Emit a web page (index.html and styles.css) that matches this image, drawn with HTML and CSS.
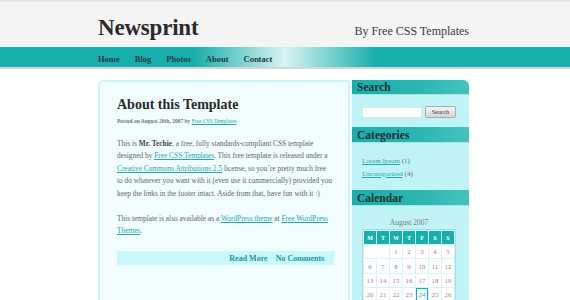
FILE: index.html
```
<!DOCTYPE html>
<html>
<head>
<meta charset="utf-8">
<title>Newsprint</title>
<link rel="stylesheet" href="styles.css">
</head>
<body>
<div class="header">
  <div class="wrap head-in">
    <h1 class="logo">Newsprint</h1>
    <p class="tagline">By Free CSS Templates</p>
  </div>
</div>
<div class="nav">
  <ul class="wrap menu">
    <li><a href="#">Home</a></li>
    <li><a href="#">Blog</a></li>
    <li><a href="#">Photos</a></li>
    <li><a href="#">About</a></li>
    <li><a href="#">Contact</a></li>
  </ul>
</div>
<div class="wrap page">
  <div class="content">
    <div class="post">
      <h2 class="title">About this Template</h2>
      <p class="meta">Posted on August 20th, 2007 by <a href="#">Free CSS Templates</a></p>
      <div class="entry">
        <p>This is <strong>Mr. Techie</strong>, a free, fully standards-compliant CSS template designed by <a href="#">Free CSS Templates</a>. This free template is released under a <a href="#">Creative Commons Attributions 2.5</a> license, so you’re pretty much free to&nbsp;do whatever you want with it (even use it commercially) provided you keep the links in the footer intact. Aside from that, have fun with it :)</p>
        <p>This template is also available as a <a href="#">WordPress theme</a> at <a href="#">Free WordPress Themes</a>.</p>
      </div>
      <p class="links"><a href="#">Read More</a><a href="#">No Comments</a></p>
    </div>
  </div>
  <div class="sidebar">
    <h3 class="side-title first">Search</h3>
    <form class="search">
      <input class="search-input" type="text">
      <button class="search-btn" type="button">Search</button>
    </form>
    <h3 class="side-title">Categories</h3>
    <ul class="cats">
      <li><a href="#">Lorem Ipsum</a> (1)</li>
      <li><a href="#">Uncategorized</a> (4)</li>
    </ul>
    <h3 class="side-title">Calendar</h3>
    <div class="cal-wrap">
      <div class="cal-caption">August 2007</div>
      <table class="cal">
        <thead>
          <tr><th>M</th><th>T</th><th>W</th><th>T</th><th>F</th><th>S</th><th>S</th></tr>
        </thead>
        <tbody>
          <tr><td colspan="2" class="pad"></td><td>1</td><td>2</td><td>3</td><td>4</td><td>5</td></tr>
          <tr><td>6</td><td>7</td><td>8</td><td>9</td><td>10</td><td>11</td><td>12</td></tr>
          <tr><td>13</td><td>14</td><td>15</td><td>16</td><td>17</td><td>18</td><td>19</td></tr>
          <tr><td>20</td><td>21</td><td>22</td><td>23</td><td class="today">24</td><td>25</td><td>26</td></tr>
        </tbody>
      </table>
    </div>
  </div>
</div>
</body>
</html>
```
FILE: styles.css
```
* { box-sizing: border-box; }
html, body { margin: 0; padding: 0; }
body {
  font-family: "Liberation Serif", "Times New Roman", serif;
  background: #ffffff;
  color: #666;
  overflow: hidden;
}
.wrap {
  width: 371px;
  margin-left: calc(50% - 187px);
}
.header {
  background: #f4f4f4;
  border-top: 2px solid #e4e4e4;
  height: 47px;
}
.head-in {
  display: flex;
  justify-content: space-between;
  align-items: flex-end;
  height: 45px;
}
.logo {
  margin: 0 0 6px 0;
  font-size: 23px;
  line-height: 26px;
  font-weight: bold;
  color: #2b2b2b;
  letter-spacing: -0.2px;
}
.tagline {
  margin: 0 0 9px 0;
  font-size: 12px;
  line-height: 14px;
  color: #3a3a3a;
}
.nav {
  height: 22px;
  background: linear-gradient(to right, #17afab 0%, #17afab 34%, #d8f3f2 50%, #17afab 66%, #17afab 100%);
  border-bottom: 2px solid #d6d6d6;
}
.menu {
  list-style: none;
  margin-top: 0;
  margin-bottom: 0;
  padding: 0;
  display: flex;
  gap: 15px;
  height: 20px;
  align-items: center;
}
.menu a {
  font-size: 8.5px;
  font-weight: bold;
  color: #253c3c;
  text-decoration: none;
}
.page {
  display: flex;
  gap: 2px;
  margin-top: 11px;
}
.content {
  width: 252px;
  flex: none;
  min-height: 240px;
  background: #f0fcfd;
  border: 2px solid #cbf4f6;
  border-bottom: none;
  border-radius: 5px 3px 0 0;
  padding: 14px 13.7px 20px 17px;
}
.title {
  margin: 0;
  font-size: 14px;
  line-height: 18px;
  color: #2a2a2a;
  font-weight: bold;
}
.meta {
  margin: 3px 0 0 0;
  font-size: 5.5px;
  line-height: 8px;
  color: #777;
  font-weight: bold;
}
.meta a {
  color: #22aaa8;
  font-weight: normal;
}
.entry {
  margin-top: 13px;
}
.entry p {
  margin: 0 0 13px 0;
  font-size: 7.37px;
  line-height: 12.4px;
  color: #666;
}
.entry strong { color: #444; }
.entry a { color: #23aba8; }
.links {
  margin: 6px 0 0 0;
  background: #c8f8fb;
  height: 14.5px;
  display: flex;
  justify-content: flex-end;
  align-items: center;
  gap: 8px;
  padding-right: 10px;
}
.links a {
  font-size: 8px;
  font-weight: bold;
  color: #1a9896;
  text-decoration: none;
}
.sidebar {
  width: 117px;
  flex: none;
  background: #bff3f6;
  border-radius: 0 6px 0 0;
  overflow: hidden;
  min-height: 240px;
}
.side-title {
  margin: 0;
  height: 16px;
  padding-left: 5px;
  font-size: 11.5px;
  line-height: 16px;
  font-weight: bold;
  color: #1d2f30;
  background: linear-gradient(to right, #1aaeaa 0%, #2db6b2 60%, #47c2be 100%);
  border-bottom: 1px solid #a6e4e6;
}
.side-title.first { height: 15px; line-height: 15px; }
.search {
  display: flex;
  align-items: center;
  gap: 3px;
  padding: 11px 0 9px 10px;
  margin: 0;
}
.search-input {
  width: 60px;
  height: 11px;
  border: 1px solid #d6e8e8;
  background: #fff;
  padding: 0;
  margin: 0;
}
.search-btn {
  width: 31px;
  height: 12px;
  padding: 0;
  margin: 0;
  font-family: "Liberation Serif", serif;
  font-size: 6.5px;
  line-height: 10px;
  color: #333;
  background: linear-gradient(#f6f6f6, #d4d4d4);
  border: 1px solid #a9a9a9;
  border-radius: 2px;
}
.cats {
  list-style: none;
  margin: 0;
  padding: 12px 0 10px 10px;
}
.cats li {
  font-size: 7px;
  line-height: 12.6px;
  color: #667;
}
.cats a { color: #23aba8; }
.cal-wrap {
  padding: 12px 0 0 10px;
}
.cal-caption {
  width: 94px;
  text-align: center;
  font-size: 7.5px;
  line-height: 9px;
  color: #777;
  margin-bottom: 2px;
}
.cal {
  border-collapse: separate;
  border-spacing: 1px;
  background: #d5f5f7;
  border: 1px solid #a3dfe2;
  width: 94px;
  table-layout: fixed;
}
.cal th {
  height: 13px;
  padding: 0;
  background: #17afab;
  color: #ffffff;
  font-size: 6px;
  font-weight: bold;
  text-align: center;
}
.cal td {
  height: 13.3px;
  padding: 0;
  background: #ffffff;
  color: #8a8a8a;
  font-size: 6.8px;
  text-align: center;
}
.cal td.today {
  outline: 1px solid #17afab;
  outline-offset: -1px;
  background: #eefcfc;
}
```
